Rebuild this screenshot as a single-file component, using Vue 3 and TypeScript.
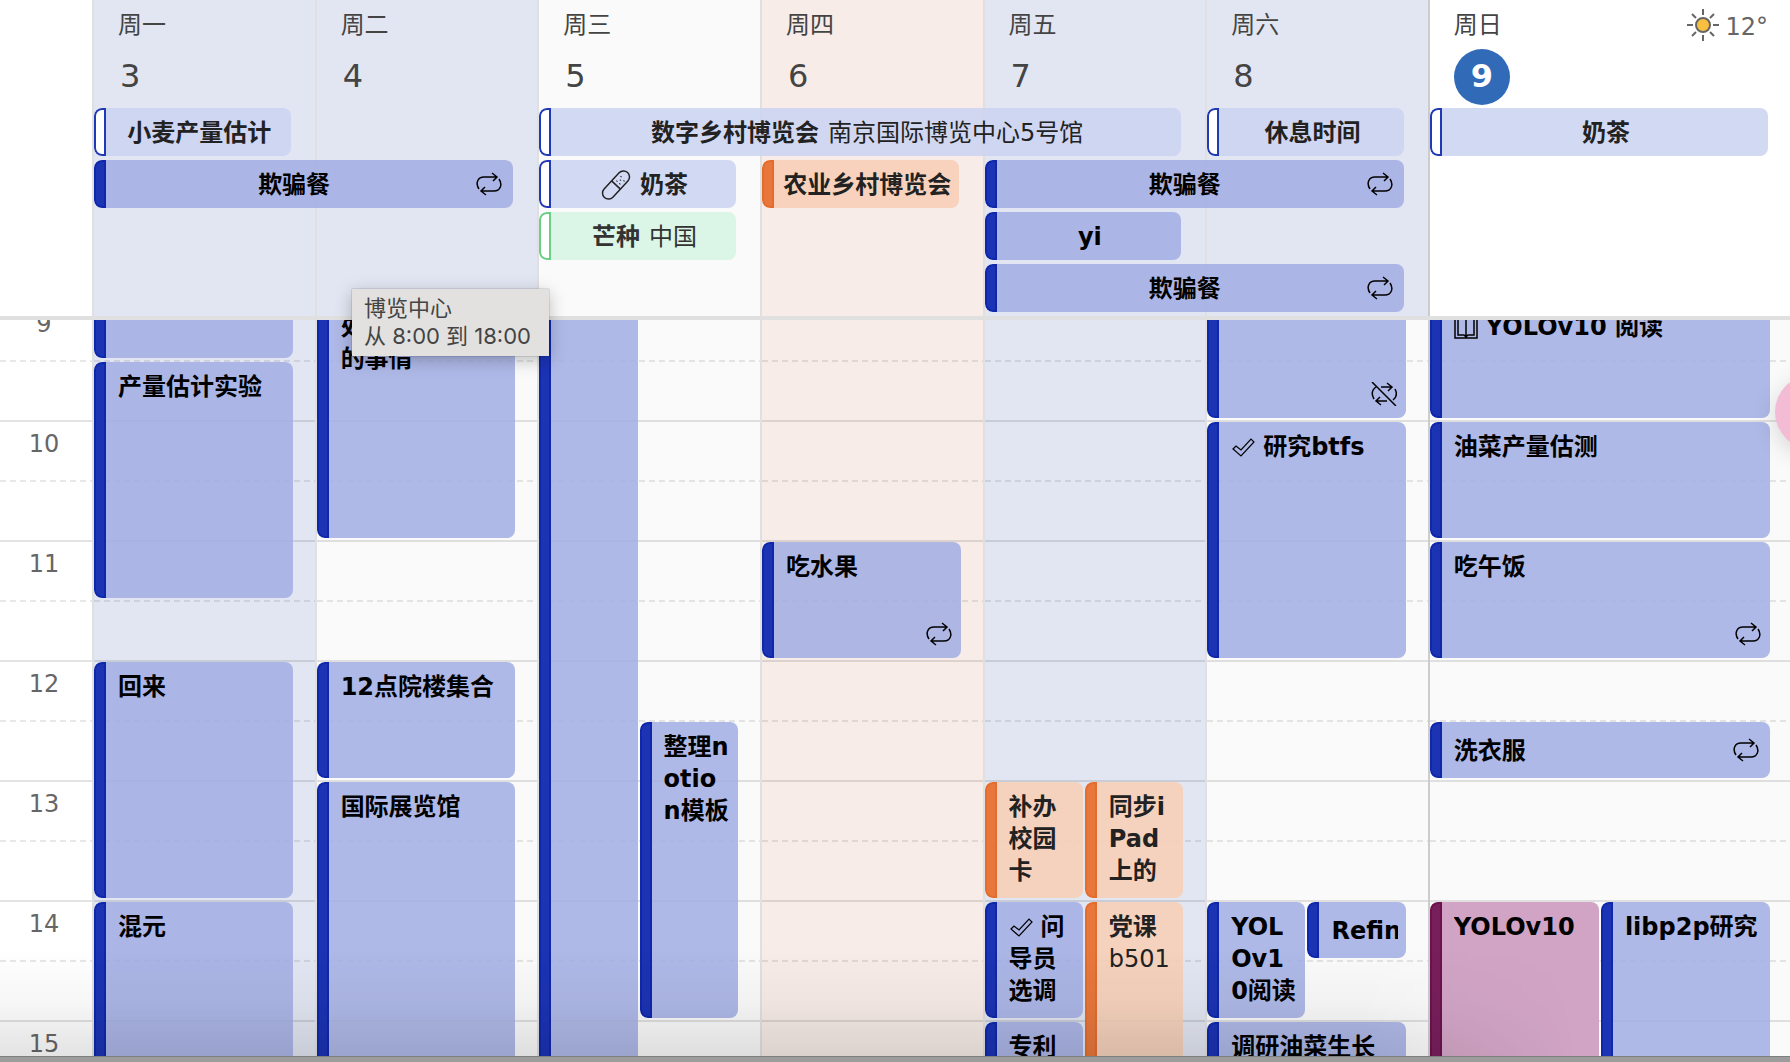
<script setup lang="ts">
type Tone = 'blue' | 'soft' | 'green' | 'orange' | 'plum'
type Glyph = 'check' | 'book' | 'bandage'

interface Day {
  name: string
  date: number
  head: string
  body: string
  today?: boolean
}

interface AllDay {
  title: string
  place?: string
  from: number
  span: number
  row: number
  tone: Tone
  repeat?: boolean
  glyph?: Glyph
}

interface Timed {
  title: string
  place?: string
  start: number
  end: number
  lane?: number
  lanes?: number
  tone?: Tone
  glyph?: Glyph
  repeat?: 'on' | 'off'
}

const FIRST_HOUR = 8
const hours: number[] = [8, 9, 10, 11, 12, 13, 14, 15, 16]

const days: Day[] = [
  { name: '周一', date: 3, head: 'cool', body: 'cool' },
  { name: '周二', date: 4, head: 'cool', body: 'plain' },
  { name: '周三', date: 5, head: 'plain', body: 'plain' },
  { name: '周四', date: 6, head: 'warm', body: 'warm' },
  { name: '周五', date: 7, head: 'cool', body: 'cool' },
  { name: '周六', date: 8, head: 'cool', body: 'plain' },
  { name: '周日', date: 9, head: 'white', body: 'plain', today: true },
]

const allDay: AllDay[] = [
  { title: '小麦产量估计', from: 1, span: 1, row: 1, tone: 'soft' },
  { title: '数字乡村博览会', place: '南京国际博览中心5号馆', from: 3, span: 3, row: 1, tone: 'soft' },
  { title: '休息时间', from: 6, span: 1, row: 1, tone: 'soft' },
  { title: '奶茶', from: 7, span: 1, row: 1, tone: 'soft' },
  { title: '欺骗餐', from: 1, span: 2, row: 2, tone: 'blue', repeat: true },
  { title: '奶茶', from: 3, span: 1, row: 2, tone: 'soft', glyph: 'bandage' },
  { title: '农业乡村博览会', from: 4, span: 1, row: 2, tone: 'orange' },
  { title: '欺骗餐', from: 5, span: 2, row: 2, tone: 'blue', repeat: true },
  { title: '芒种', place: '中国', from: 3, span: 1, row: 3, tone: 'green' },
  { title: 'yi', from: 5, span: 1, row: 3, tone: 'blue' },
  { title: '欺骗餐', from: 5, span: 2, row: 4, tone: 'blue', repeat: true },
]

const timed: Timed[][] = [
  [
    { title: '', start: 8, end: 9.5 },
    { title: '产量估计实验', start: 9.5, end: 11.5 },
    { title: '回来', start: 12, end: 14 },
    { title: '混元', start: 14, end: 16 },
  ],
  [
    { title: '处理\n的事情', start: 9, end: 11 },
    { title: '12点院楼集合', start: 12, end: 13 },
    { title: '国际展览馆', start: 13, end: 16 },
  ],
  [
    { title: '', start: 8, end: 17, lane: 1, lanes: 2 },
    { title: '整理notion模板', start: 12.5, end: 15, lane: 2, lanes: 2 },
  ],
  [{ title: '吃水果', start: 11, end: 12, repeat: 'on' }],
  [
    { title: '补办校园卡', start: 13, end: 14, lane: 1, lanes: 2, tone: 'orange' },
    { title: '同步iPad上的', start: 13, end: 14, lane: 2, lanes: 2, tone: 'orange' },
    { title: '问导员选调', start: 14, end: 15, lane: 1, lanes: 2, glyph: 'check' },
    { title: '党课', place: 'b501', start: 14, end: 16, lane: 2, lanes: 2, tone: 'orange' },
    { title: '专利', start: 15, end: 16, lane: 1, lanes: 2 },
  ],
  [
    { title: '', start: 8, end: 10, repeat: 'off' },
    { title: '研究btfs', start: 10, end: 12, glyph: 'check' },
    { title: 'YOLOv10阅读', start: 14, end: 15, lane: 1, lanes: 2 },
    { title: 'Refin', start: 14, end: 14.5, lane: 2, lanes: 2 },
    { title: '调研油菜生长', start: 15, end: 16 },
  ],
  [
    { title: 'YOLOv10 阅读', start: 9, end: 10, glyph: 'book' },
    { title: '油菜产量估测', start: 10, end: 11 },
    { title: '吃午饭', start: 11, end: 12, repeat: 'on' },
    { title: '洗衣服', start: 12.5, end: 13, repeat: 'on' },
    { title: 'YOLOv10', start: 14, end: 16, lane: 1, lanes: 2, tone: 'plum' },
    { title: 'libp2p研究', start: 14, end: 16, lane: 2, lanes: 2 },
  ],
]

function timedPlace(e: Timed): Record<string, string> {
  const row = (h: number): number => (h - FIRST_HOUR) * 2 + 1
  return {
    gridRow: `${row(e.start)} / ${row(e.end)}`,
    gridColumn: e.lanes === 2 ? `${e.lane}` : '1 / 3',
  }
}

function allDayPlace(e: AllDay): Record<string, string> {
  return { gridColumn: `${e.from} / span ${e.span}`, gridRow: `${e.row}` }
}
</script>

<template>
  <main class="week">
    <header class="head">
      <div class="corner"></div>
      <div class="head-days">
        <section
          v-for="(d, i) in days"
          :key="d.date"
          class="day-head"
          :class="[d.head, { today: d.today }]"
          :style="{ gridColumn: `${i + 1}` }"
        >
          <div class="day-row">
            <span class="day-name">{{ d.name }}</span>
            <span v-if="d.today" class="weather">
              <svg width="32" height="32" viewBox="0 0 32 32" aria-hidden="true">
                <circle cx="16" cy="16" r="7" fill="#f8bf40" stroke="#666" stroke-width="2" />
                <path
                  d="M16 0v6M16 26v6M0 16h6M26 16h6M5 5l4 4M23 23l4 4M5 27l4-4M23 9l4-4"
                  stroke="#666"
                  stroke-width="2"
                  fill="none"
                />
              </svg>
              12°
            </span>
          </div>
          <span class="date">{{ d.date }}</span>
        </section>
        <div class="all-day">
          <article
            v-for="(e, i) in allDay"
            :key="i"
            class="event banner"
            :class="[e.tone, { last: e.from === 7, repeating: e.repeat }]"
            :style="allDayPlace(e)"
          >
            <span class="bar"></span>
            <p class="label">
              <svg v-if="e.glyph === 'bandage'" class="bandage" width="30" height="30" viewBox="-1 -1 30 30" aria-hidden="true">
                <g transform="rotate(-47 14 14)" fill="none" stroke="currentColor" stroke-width="1.5">
                  <rect x="-3" y="8" width="34" height="12" rx="6" />
                  <path d="M14 8v12M17 12h1M17 16h1M20 14h1M23 12h1M22 17h1" />
                </g>
              </svg>
              <b>{{ e.title }}</b>
              <span v-if="e.place" class="place">{{ e.place }}</span>
            </p>
            <svg v-if="e.repeat" class="repeat" width="26" height="24" viewBox="0 0 26 24" aria-hidden="true">
              <path d="M3 17C-1 11 2 5 8 5h13M16 1l5 4-4 4M23 7c4 6 1 12-5 12H5M9 15l-4 4 5 4" />
            </svg>
          </article>
        </div>
      </div>
    </header>

    <div class="body">
      <div class="scroll">
        <div class="hours">
          <div v-for="h in hours" :key="h" class="hour">{{ h }}</div>
        </div>
        <section v-for="(d, i) in days" :key="d.date" class="column" :class="[d.body, { eve: i === 5, final: i === 6 }]">
          <article
            v-for="(e, j) in timed[i]"
            :key="j"
            class="event timed"
            :class="[e.tone ?? 'blue', { short: e.end - e.start < 1 }]"
            :style="timedPlace(e)"
          >
            <span class="bar"></span>
            <div class="text">
              <b>
                <svg v-if="e.glyph === 'check'" class="check" width="24" height="20" viewBox="0 0 24 20" aria-hidden="true">
                  <path d="M2 12l3-3 5 4L20 2l3 3L10 19z" />
                </svg>
                <svg v-if="e.glyph === 'book'" class="book" width="24" height="24" viewBox="0 0 24 24" aria-hidden="true">
                  <path d="M1 3v20h22V3M4 1v19h6l2 2 2-2h6V1M4 1h6l2 2 2-2h6M12 3v18" />
                </svg>{{ e.title }}</b>
              <span v-if="e.place" class="line">{{ e.place }}</span>
            </div>
            <svg v-if="e.repeat" class="repeat" width="26" height="24" viewBox="0 0 26 24" aria-hidden="true">
              <path
                v-if="e.repeat === 'on'"
                d="M3 17C-1 11 2 5 8 5h13M16 1l5 4-4 4M23 7c4 6 1 12-5 12H5M9 15l-4 4 5 4"
              />
              <path v-else d="M1 0l24 24M3 17C0 12 1 8 5 5M10 5h11M16 1l5 4-4 4M24 7c2 4 2 8-2 11M16 19H5M9 15l-4 4 5 4" />
            </svg>
          </article>
        </section>
      </div>
      <div class="shade"></div>
    </div>
    <footer class="edge"></footer>

    <div class="tooltip" role="tooltip">博览中心<br />从 8:00 到 18:00</div>
    <div class="bubble"></div>
  </main>
</template>

<style>
body {
  margin: 0;
}
</style>

<style scoped>
.week {
  --days: repeat(6, minmax(0, 1fr)) minmax(0, 1.618fr);
  position: relative;
  display: flex;
  flex-direction: column;
  height: 100vh;
  overflow: hidden;
  background: #fff;
  color: #000;
  font: 24px/32px 'DejaVu Sans', 'Noto Sans CJK SC', sans-serif;
}

.head {
  display: flex;
  border-bottom: 4px solid #e0e0e0;
}

.corner {
  box-sizing: border-box;
  flex: none;
  width: 94px;
  border-right: 2px solid #e0e0e0;
}

.head-days {
  flex: 1;
  min-width: 0;
  display: grid;
  grid-template-columns: var(--days);
  grid-template-rows: 108px auto;
}

.day-head {
  grid-row: 1 / 3;
  box-sizing: border-box;
  padding: 9px 22px 0 24px;
  border-right: 2px solid #e0e0e0;
  color: #444;
}

.day-head:nth-child(6) {
  border-right-color: #ccc;
}

.day-head.today {
  border-right: 0;
}

.cool {
  background: #e2e6f2;
}

.plain {
  background: #fafafa;
}

.warm {
  background: #f7ece7;
}

.white {
  background: #fff;
}

.day-row {
  display: flex;
  justify-content: space-between;
  height: 40px;
}

.weather {
  display: flex;
  gap: 6px;
  color: #666;
  line-height: 36px;
}

.date {
  display: block;
  width: 56px;
  padding-left: 2px;
  font-size: 32px;
  line-height: 54px;
}

.today .date {
  padding: 0;
  height: 56px;
  border-radius: 50%;
  background: #316bb8;
  color: #fff;
  font-weight: 700;
  text-align: center;
}

.all-day {
  grid-column: 1 / -1;
  grid-row: 2;
  display: grid;
  grid-template-columns: var(--days);
  grid-template-rows: repeat(4, 48px);
  row-gap: 4px;
  padding-bottom: 4px;
}

.event {
  position: relative;
  display: flex;
  min-width: 0;
  border-radius: 8px;
  overflow: hidden;
}

.bar {
  box-sizing: border-box;
  flex: none;
  width: 12px;
  border: 2px solid #0f28ab;
  border-radius: 8px 0 0 8px;
  background: #1c33b3;
}

.blue {
  background: rgba(163, 175, 227, 0.87);
}

.soft {
  background: rgba(203, 211, 241, 0.87);
  color: #222;
}

.soft .bar {
  border-color: #2239b6;
  background: #fff;
}

.green {
  background: #dbf6e7;
  color: #333;
}

.green .bar {
  border-color: #6bcf85;
  background: #fff;
}

.orange {
  background: rgba(247, 207, 183, 0.9);
  color: #222;
}

.orange .bar {
  border-color: #e46c2c;
  background: #e7773d;
}

.plum {
  background: #d1a4c5;
}

.plum .bar {
  border-color: #6b124f;
  background: #771f5b;
}

.banner {
  align-items: center;
  margin-right: 26px;
}

.banner.last {
  margin-right: 22px;
}

.banner .bar {
  align-self: stretch;
}

.label {
  display: flex;
  flex: 1;
  align-items: center;
  justify-content: center;
  gap: 9px;
  min-width: 0;
  margin: 0 6px 0 8px;
  padding-top: 2px;
  white-space: nowrap;
}

.repeating .label {
  margin-right: 2px;
}

.bandage {
  flex: none;
}

.repeat {
  flex: none;
  fill: none;
  stroke: currentColor;
  stroke-width: 1.5;
}

.banner .repeat {
  margin-right: 11px;
}

.body {
  position: relative;
  flex: 1;
  min-height: 0;
  overflow: hidden;
}

/* scrolled so that the view opens shortly after nine */
.scroll {
  display: grid;
  grid-template-columns: 94px var(--days);
  margin-top: -140px;
}

.hours,
.column {
  position: relative;
  box-sizing: border-box;
  border-right: 2px solid #e0e0e0;
  background-image: linear-gradient(rgba(0, 0, 0, 0.11) 2px, transparent 2px);
  background-size: 100% 120px;
}

/* dashed half-hour lines */
.hours::before,
.column::before {
  content: '';
  position: absolute;
  inset: 0;
  background: repeating-linear-gradient(90deg, rgba(0, 0, 0, 0.09) 0 6px, transparent 6px 10px);
  mask-image: repeating-linear-gradient(transparent 0 60px, #000 60px 62px, transparent 62px 120px);
}

.hours {
  color: #666;
}

.hour {
  box-sizing: border-box;
  height: 120px;
  padding: 8px 4px 0 0;
  text-align: center;
}

.column {
  display: grid;
  grid-template-columns: repeat(2, minmax(0, 1fr));
  grid-template-rows: repeat(18, 60px);
  column-gap: 2px;
  padding-right: 22px;
}

.column.eve {
  border-right-color: #ccc;
}

.column.final {
  padding-right: 20px;
  border-right: 0;
}

.timed {
  margin: 2px 0;
}

.text {
  flex: 1;
  min-width: 0;
  margin: 9px 8px 0 12px;
  overflow: hidden;
  white-space: pre-line;
  word-break: break-all;
}

.line {
  display: block;
}

.timed .repeat {
  position: absolute;
  right: 9px;
  bottom: 12px;
}

.short {
  align-items: center;
}

.short .bar {
  align-self: stretch;
}

.short .text {
  margin-top: 0;
  padding-top: 2px;
  white-space: nowrap;
}

.timed.short .repeat {
  position: static;
  margin-right: 11px;
}

.check,
.book {
  margin-right: 8px;
  fill: none;
  stroke: currentColor;
  stroke-width: 1.5;
}

.check {
  stroke-width: 1.2;
  vertical-align: -2px;
}

.book {
  vertical-align: -4px;
}

.shade {
  position: absolute;
  inset: auto 0 0 0;
  height: 108px;
  background: linear-gradient(transparent, rgba(0, 0, 0, 0.03) 50%, rgba(0, 0, 0, 0.11));
  mask-image: linear-gradient(90deg, #000 76%, transparent 88%);
}

.edge {
  box-sizing: border-box;
  flex: none;
  height: 6px;
  border-top: 1px solid #808080;
  background: #9c9c9c;
}

.tooltip {
  position: absolute;
  left: 352px;
  top: 289px;
  padding: 5px 18px 6px 12px;
  background: #e2e1df;
  box-shadow:
    0 0 1px rgba(0, 0, 0, 0.5),
    0 4px 16px rgba(0, 0, 0, 0.25);
  color: #444;
  font: 22px/28px Inter, 'Noto Sans CJK SC', sans-serif;
}

.bubble {
  position: absolute;
  right: -59px;
  top: 375px;
  width: 74px;
  height: 74px;
  border-radius: 50%;
  background: #f3bcd4;
  box-shadow: 0 6px 24px rgba(0, 0, 0, 0.15);
}
</style>
